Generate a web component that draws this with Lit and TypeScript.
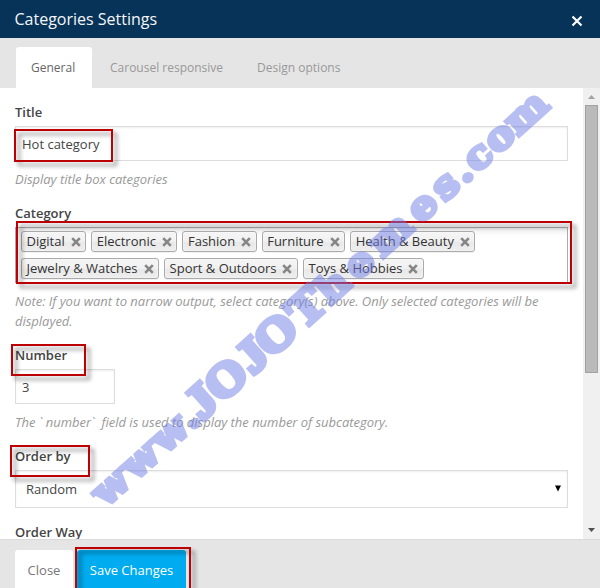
import { LitElement, html, css } from "lit";
import { customElement, state } from "lit/decorators.js";

@customElement("tag-chip")
class TagChip extends LitElement {
  static styles = css`
    :host {
      display: flex;
      align-items: center;
      box-sizing: border-box;
      height: 21px;
      padding: 0 4.5px;
      gap: 6px;
      border: 1px solid #aaa;
      border-radius: 3px;
      background: linear-gradient(#f4f4f4 20%, #f0f0f0 50%, #e8e8e8 52%, #eee);
      box-shadow: 0 0 2px #fff inset, 0 1px 0 rgba(0, 0, 0, 0.05);
      color: #333;
      white-space: nowrap;
      line-height: 18px;
    }
    .name {
      height: 19px;
    }
    svg {
      width: 10px;
      height: 10px;
      flex: none;
    }
  `;
  render() {
    return html`<span class="name"><slot></slot></span
      ><svg viewBox="0 0 10 10">
        <path d="M1.2 1.2L8.8 8.8M8.8 1.2L1.2 8.8" stroke="#868686" stroke-width="2.6" />
      </svg>`;
  }
}

@customElement("app-root")
class AppRoot extends LitElement {
  @state() tabs = ["General", "Carousel responsive", "Design options"];
  @state() rows = [
    ["Digital", "Electronic", "Fashion", "Furniture", "Health & Beauty"],
    ["Jewelry & Watches", "Sport & Outdoors", "Toys & Hobbies"],
  ];

  static styles = css`
    :host {
      display: flex;
      flex-direction: column;
      position: relative;
      width: 600px;
      height: 588px;
      overflow: hidden;
      background: #fff;
      font: 13px/20px "Open Sans", sans-serif;
      color: #444;
    }
    * {
      box-sizing: border-box;
    }
    header {
      flex: none;
      height: 38px;
      padding: 0 17px 0 14.5px;
      display: flex;
      align-items: center;
      justify-content: space-between;
      background: #083358;
      color: #f4f6f8;
      font-size: 16px;
    }
    .close {
      width: 12px;
      height: 12px;
      margin-top: 4px;
    }
    nav {
      flex: none;
      height: 50px;
      padding: 9px 16px 0;
      display: flex;
      gap: 2px;
      background: #e5e5e5;
      font-size: 12px;
    }
    .tab {
      padding: 11px 16px 0;
      color: #999;
      border-radius: 3px 3px 0 0;
      white-space: nowrap;
    }
    .tab.active {
      padding: 11px 15px 0;
      width: 76px;
      background: #fff;
      color: #666;
    }
    main {
      flex: none;
      height: 451px;
      display: flex;
      overflow: hidden;
    }
    .form {
      flex: 1;
      padding: 14px 15px 0;
    }
    .label {
      font-weight: 600;
      height: 24px;
      color: #444;
    }
    .input {
      height: 35px;
      border: 1px solid #ddd;
      box-shadow: inset 0 1px 2px rgba(0, 0, 0, 0.07);
      padding: 7px 6px;
      line-height: 20px;
    }
    .number {
      width: 100px;
    }
    .help {
      font-style: italic;
      color: #999;
      margin: 8px 0 14px;
      letter-spacing: -0.02px;
    }
    .tick {
      letter-spacing: 3.5px;
    }
    .chosen {
      height: 56px;
      border: 1px solid #aaa;
      background: linear-gradient(#eee 1%, #fff 15%);
      padding: 3px 0 0 5px;
      display: flex;
      flex-direction: column;
      gap: 6px;
    }
    .chips {
      display: flex;
      gap: 5px;
    }
    .select {
      height: 38px;
      padding: 8px 5px 0 10px;
      display: flex;
      justify-content: space-between;
      margin-bottom: 14px;
    }
    .arrow {
      width: 8px;
      height: 7px;
      margin-top: 6px;
    }
    .bar {
      flex: none;
      width: 17px;
      background: #f0f0f0;
      display: flex;
      flex-direction: column;
      align-items: center;
      padding: 7px 0 7px;
    }
    .bar svg {
      width: 7px;
      height: 4px;
    }
    .thumb {
      width: 13px;
      height: 268px;
      margin: 6px 0 auto;
      background: #bababa;
      border: 1px solid #a2a2a2;
    }
    footer {
      flex: 1;
      border-top: 1px solid #dadada;
      background: #e5e5e5;
      padding: 10px 15px 0;
      display: flex;
      gap: 4px;
    }
    .btn {
      height: 44px;
      width: 58px;
      border-radius: 3px;
      background: #fff;
      color: #777;
      text-align: center;
      line-height: 41px;
    }
    .btn.primary {
      width: 109px;
      background: #00abef;
      color: #fff;
    }
    .mark {
      position: absolute;
      border: 2px solid #bd0003;
      filter: drop-shadow(4px 4px 2px rgba(0, 0, 0, 0.45));
    }
    .m1 { left: 14px; top: 129px; width: 99px; height: 33px; }
    .m2 { left: 16px; top: 221px; width: 556px; height: 63px; }
    .m3 { left: 11px; top: 344px; width: 75px; height: 32px; }
    .m4 { left: 10px; top: 445px; width: 80px; height: 32px; }
    .m5 { left: 75px; top: 547px; width: 116px; height: 50px; }
    .watermark {
      position: absolute;
      inset: 0;
      width: 600px;
      height: 588px;
    }
    .watermark text {
      font: bold 38px "DejaVu Serif", serif;
      fill: #707fe6;
      stroke: #707fe6;
      stroke-width: 4px;
      text-anchor: middle;
    }
    .watermark .caps {
      font: bold 47px "Liberation Serif", serif;
      stroke-width: 5px;
    }
  `;

  render() {
    return html`
      <header>
        <span>Categories Settings</span>
        <svg class="close" viewBox="0 0 12 12">
          <path d="M1.5 1.5L10.5 10.5M10.5 1.5L1.5 10.5" stroke="#fff" stroke-width="2.2" />
        </svg>
      </header>
      <nav>
        ${this.tabs.map((t, i) => html`<div class="tab ${i ? "" : "active"}">${t}</div>`)}
      </nav>
      <main>
        <div class="form">
          <div class="label">Title</div>
          <div class="input">Hot category</div>
          <div class="help">Display title box categories</div>
          <div class="label">Category</div>
          <div class="chosen">
            ${this.rows.map(
              (r) => html`<div class="chips">${r.map((c) => html`<tag-chip>${c}</tag-chip>`)}</div>`
            )}
          </div>
          <div class="help">
            Note: If you want to narrow output, select category(s) above. Only selected categories will be displayed.
          </div>
          <div class="label">Number</div>
          <div class="input number">3</div>
          <div class="help">The <span class="tick">\`</span>number<span class="tick">\`</span> field is used to display the number of subcategory.</div>
          <div class="label">Order by</div>
          <div class="input select">
            <span>Random</span>
            <svg class="arrow" viewBox="0 0 8 7"><path d="M1 0.5H7L4 6.5Z" fill="#000" /></svg>
          </div>
          <div class="label">Order Way</div>
        </div>
        <div class="bar">
          <svg viewBox="0 0 7 4"><path d="M0 4L3.5 0L7 4Z" fill="#a3a3a3" /></svg>
          <div class="thumb"></div>
          <svg viewBox="0 0 7 4"><path d="M0 0H7L3.5 4Z" fill="#505050" /></svg>
        </div>
      </main>
      <footer>
        <div class="btn">Close</div>
        <div class="btn primary">Save Changes</div>
      </footer>
      <div class="mark m1"></div>
      <div class="mark m2"></div>
      <div class="mark m3"></div>
      <div class="mark m4"></div>
      <div class="mark m5"></div>
      <svg class="watermark" viewBox="0 0 600 588" opacity="0.5">
        <text transform="translate(104.5 509) rotate(-42) scale(1.1 1)"><tspan x="18 54 90 113">www.</tspan><tspan class="caps" x="131 161 193 222 259">JOJOT</tspan><tspan x="290 322 360 399 427 447 467 493 526">hemes.com</tspan></text>
      </svg>
    `;
  }
}
